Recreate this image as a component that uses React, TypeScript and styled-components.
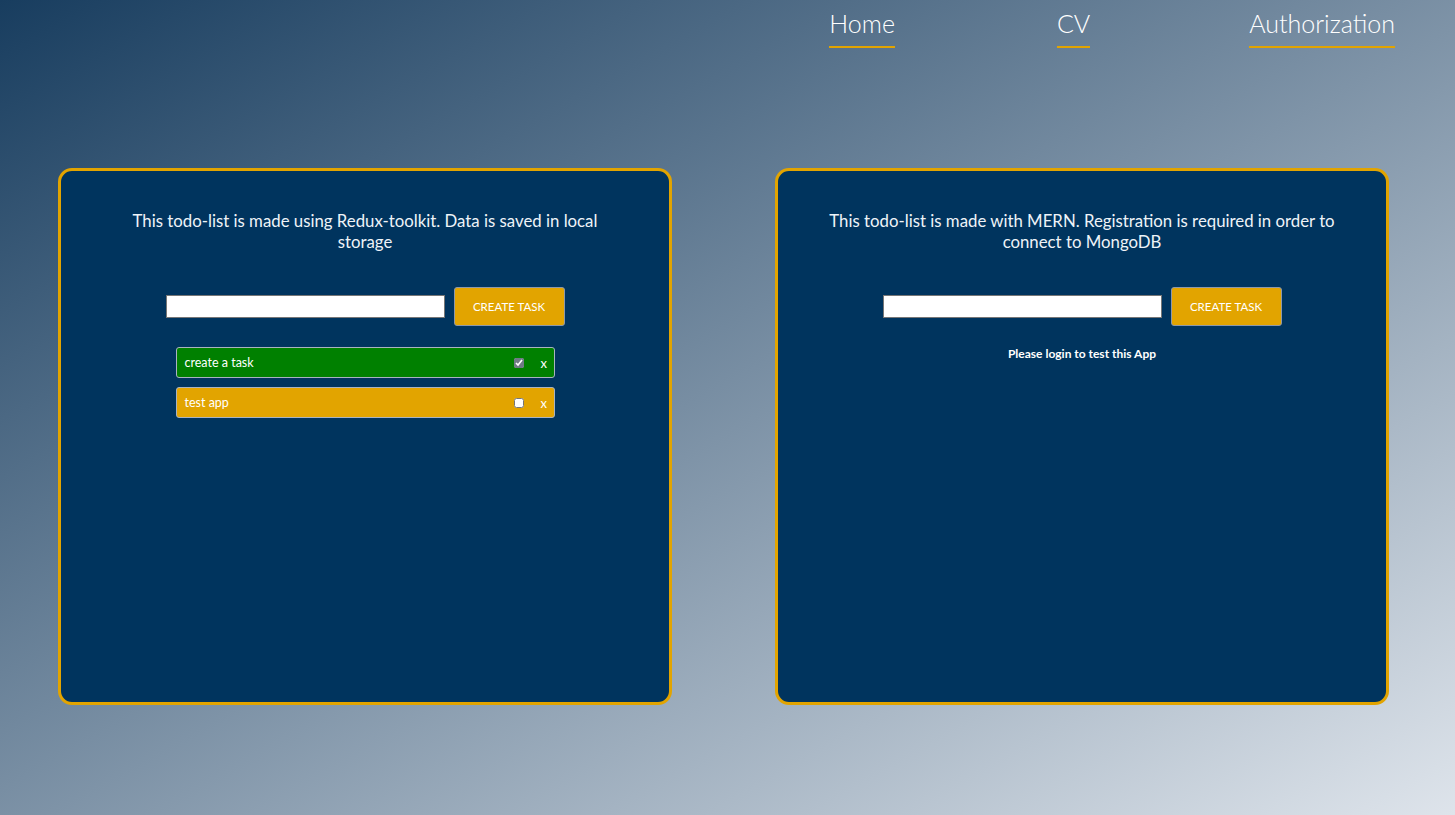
import React from "react";
import styled, { createGlobalStyle } from "styled-components";

const Global = createGlobalStyle`
  html, body { margin: 0; padding: 0; }
  body {
    font-family: Lato, "Noto Sans", sans-serif;
    min-height: 815px;
    background: linear-gradient(to bottom right, #183d5f 0%, #dee4eb 100%);
    background-attachment: fixed;
  }
`;

const Page = styled.div`
  min-height: 815px;
  display: flex;
  flex-direction: column;
`;

const Nav = styled.nav`
  display: flex;
  justify-content: flex-end;
  padding: 7px 60px 0 0;
  height: 168px;
  box-sizing: border-box;
`;

const NavLink = styled.a<{ $ml: number }>`
  margin-left: ${(p) => p.$ml}px;
  color: #ffffff;
  font-family: Lato, sans-serif;
  font-weight: 300;
  font-size: 25px;
  line-height: 32px;
  text-decoration: none;
  padding-bottom: 7px;
  border-bottom: 2px solid #e2a400;
  height: 32px;
`;

const Cards = styled.main`
  display: flex;
  gap: 103px;
  padding-left: 58px;
`;

const Card = styled.section`
  width: 614px;
  height: 537px;
  box-sizing: border-box;
  background: #00345e;
  border: 3px solid #e2a400;
  border-radius: 14px;
  padding: 39px 0 0;
  display: flex;
  flex-direction: column;
  align-items: center;
`;

const Intro = styled.p`
  margin: 0;
  width: 512px;
  text-align: center;
  color: #eef3f8;
  font-size: 16.8px;
  line-height: 21px;
`;

const Form = styled.div`
  display: flex;
  align-items: center;
  gap: 9px;
  margin-top: 35px;
`;

const Input = styled.input`
  width: 279px;
  height: 23px;
  box-sizing: border-box;
  border: 1px solid #767676;
  background: #fff;
  margin: 0;
  padding: 0 3px;
`;

const Button = styled.button`
  width: 111px;
  height: 39px;
  box-sizing: border-box;
  background: #e2a400;
  border: 1px solid #8e98a8;
  border-radius: 3px;
  color: #fff;
  font-family: Lato, sans-serif;
  font-size: 11.5px;
  font-weight: 400;
  padding: 0;
`;

const List = styled.ul`
  list-style: none;
  margin: 21px 0 0;
  padding: 0;
  width: 379px;
  display: flex;
  flex-direction: column;
  gap: 9px;
`;

const Task = styled.li<{ $done: boolean }>`
  height: 31px;
  box-sizing: border-box;
  display: flex;
  align-items: center;
  padding: 0 5px 0 8px;
  border: 1px solid #a9b3c0;
  border-radius: 3px;
  background: ${(p) => (p.$done ? "#008000" : "#e2a400")};
  color: #fff;
  font-size: 12.5px;
`;

const TaskText = styled.span`
  flex: 1;
`;

const Check = styled.input`
  width: 10px;
  height: 10px;
  margin: 0 17px 0 0;
  accent-color: #6f7a86;
`;

const Remove = styled.span`
  font-size: 13px;
  width: 8px;
`;

const Login = styled.p`
  margin: 20px 0 0;
  color: #fff;
  font-size: 12px;
  font-weight: 700;
`;

export default function App() {
  return (
    <Page>
      <Global />
      <Nav>
        <NavLink href="#" $ml={0}>Home</NavLink>
        <NavLink href="#" $ml={162}>CV</NavLink>
        <NavLink href="#" $ml={159}>Authorization</NavLink>
      </Nav>
      <Cards>
        <Card>
          <Intro>This todo-list is made using Redux-toolkit. Data is saved in local storage</Intro>
          <Form>
            <Input type="text" />
            <Button>CREATE TASK</Button>
          </Form>
          <List>
            <Task $done>
              <TaskText>create a task</TaskText>
              <Check type="checkbox" defaultChecked />
              <Remove>x</Remove>
            </Task>
            <Task $done={false}>
              <TaskText>test app</TaskText>
              <Check type="checkbox" />
              <Remove>x</Remove>
            </Task>
          </List>
        </Card>
        <Card>
          <Intro>This todo-list is made with MERN. Registration is required in order to connect to MongoDB</Intro>
          <Form>
            <Input type="text" />
            <Button>CREATE TASK</Button>
          </Form>
          <Login>Please login to test this App</Login>
        </Card>
      </Cards>
    </Page>
  );
}
